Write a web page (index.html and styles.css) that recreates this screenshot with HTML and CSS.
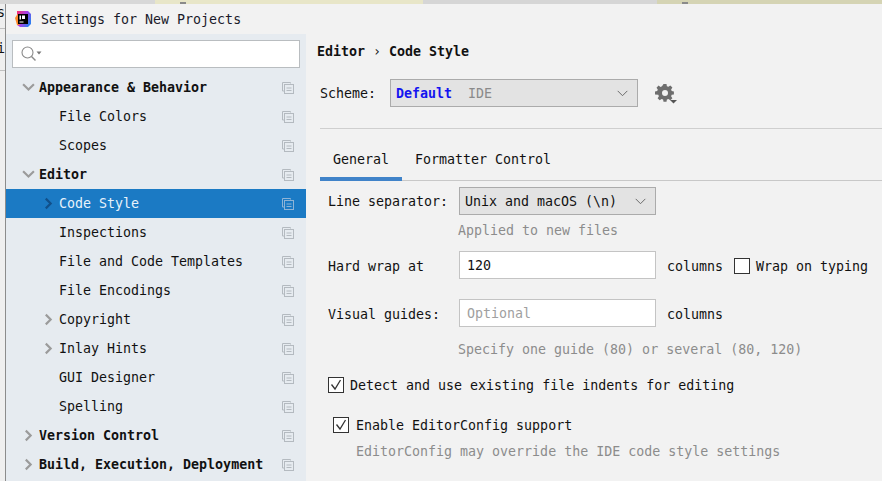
FILE: index.html
```html
<!DOCTYPE html>
<html lang="en">
<head>
<meta charset="utf-8">
<title>Settings for New Projects</title>
<link rel="stylesheet" href="styles.css">
</head>
<body>
<svg class="sprites" width="0" height="0" aria-hidden="true">
  <symbol id="copy" viewBox="0 0 12 12">
    <path d="M8.500 1.500V.5H.5V9h2" fill="none" stroke="currentColor"/>
    <rect x="2.500" y="2.500" width="9" height="9" fill="none" stroke="currentColor"/>
    <path d="M4.500 6h5M4.500 8.500h5" stroke="currentColor"/>
  </symbol>
  <symbol id="right" viewBox="0 0 10 12"><path d="M2.500 1.500 7 6l-4.500 4.500" fill="none" stroke="currentColor" stroke-width="2"/></symbol>
  <symbol id="down" viewBox="0 0 12 10"><path d="M1 2l5 4.800L11 2" fill="none" stroke="currentColor" stroke-width="2"/></symbol>
  <symbol id="caret" viewBox="0 0 14 8"><path d="M1.500 1 7 6.500 12.500 1" fill="none" stroke="currentColor" stroke-width="1.100"/></symbol>
  <symbol id="check" viewBox="0 0 14 14"><path d="M2.500 6.500 6 11l5.500-9" fill="none" stroke="#333" stroke-width="1.300"/></symbol>
</svg>
<div class="desktop">
  <div class="backdrop-top">
    <span class="strip strip-a"></span>
    <span class="strip strip-b"><span class="blob"></span></span>
    <span class="strip strip-c"></span>
    <span class="strip strip-d"><span class="blob"></span></span>
  </div>
  <div class="backdrop-row">
    <div class="backdrop-left"><span class="peek peek-s">s</span><span class="peek peek-i">i</span><span class="peek-line peek-line-a"></span><span class="peek-line peek-line-b"></span></div>
    <div class="window">
      <header class="titlebar">
        <svg class="logo" width="16" height="16" viewBox="0 0 16 16">
          <defs><linearGradient id="lg" x1="0" y1="0" x2="1" y2=".6"><stop offset="0" stop-color="#fc2f6a"/><stop offset=".55" stop-color="#a63fe8"/><stop offset="1" stop-color="#2f7cf0"/></linearGradient></defs>
          <path d="M2 0h11l3 3v10l-3 3H5l-3-2z" fill="url(#lg)"/>
          <path d="M0 7 2.500 3 5 8l-.5 6-2.500 0z" fill="#ff8a2a"/>
          <rect x="3" y="3" width="10" height="10" fill="#000"/>
          <rect x="4.500" y="10.500" width="4" height="1" fill="#fff"/>
          <rect x="4.500" y="4.500" width="1.500" height="4" fill="#fff"/>
          <rect x="7" y="4.500" width="3" height="3.500" fill="#fff"/>
        </svg>
        <span class="title">Settings for New Projects</span>
      </header>
      <div class="panes">
        <aside class="sidebar">
          <div class="search">
            <svg width="25" height="20" viewBox="0 0 25 20"><circle cx="8.500" cy="8.500" r="5.500" fill="none" stroke="#8a8a8a" stroke-width="1.100"/><path d="M12.500 12.500 16.500 16.500" stroke="#8a8a8a" stroke-width="1.500"/><path d="M17.500 7.500h5l-2.500 3z" fill="#777"/></svg>
          </div>
          <ul class="tree">
            <li class="row row-top"><svg class="chev"><use href="#down"/></svg><span class="strong">Appearance &amp; Behavior</span><svg class="copy"><use href="#copy"/></svg></li>
            <li class="row row-sub"><span>File Colors</span><svg class="copy"><use href="#copy"/></svg></li>
            <li class="row row-sub"><span>Scopes</span><svg class="copy"><use href="#copy"/></svg></li>
            <li class="row row-top"><svg class="chev"><use href="#down"/></svg><span class="strong">Editor</span><svg class="copy"><use href="#copy"/></svg></li>
            <li class="row row-sub row-selected"><svg class="arrow"><use href="#right"/></svg><span>Code Style</span><svg class="copy"><use href="#copy"/></svg></li>
            <li class="row row-sub"><span>Inspections</span><svg class="copy"><use href="#copy"/></svg></li>
            <li class="row row-sub"><span>File and Code Templates</span><svg class="copy"><use href="#copy"/></svg></li>
            <li class="row row-sub"><span>File Encodings</span><svg class="copy"><use href="#copy"/></svg></li>
            <li class="row row-sub"><svg class="arrow"><use href="#right"/></svg><span>Copyright</span><svg class="copy"><use href="#copy"/></svg></li>
            <li class="row row-sub"><svg class="arrow"><use href="#right"/></svg><span>Inlay Hints</span><svg class="copy"><use href="#copy"/></svg></li>
            <li class="row row-sub"><span>GUI Designer</span><svg class="copy"><use href="#copy"/></svg></li>
            <li class="row row-sub"><span>Spelling</span><svg class="copy"><use href="#copy"/></svg></li>
            <li class="row row-top"><svg class="chev chev-r"><use href="#right"/></svg><span class="strong">Version Control</span><svg class="copy"><use href="#copy"/></svg></li>
            <li class="row row-top"><svg class="chev chev-r"><use href="#right"/></svg><span class="strong">Build, Execution, Deployment</span><svg class="copy"><use href="#copy"/></svg></li>
          </ul>
        </aside>
        <main class="content">
          <div class="crumbs strong">Editor<span class="crumb-sep">›</span>Code Style</div>
          <div class="scheme">
            <span class="scheme-label">Scheme:</span>
            <div class="combo combo-scheme"><span class="scheme-name">Default</span><span class="scheme-kind">IDE</span><svg class="caret"><use href="#caret"/></svg></div>
            <svg class="gear" width="24" height="24" viewBox="0 0 24 24">
              <path fill="#6e6e6e" fill-rule="evenodd" d="M9.500 2h3l.4 2.200 1.500.6 1.900-1.300 2.100 2.100-1.300 1.900.6 1.500 2.200.4v3l-2.200.4-.6 1.500 1.300 1.900-2.100 2.100-1.900-1.300-1.500.6-.4 2.200h-3l-.4-2.200-1.500-.6-1.900 1.300-2.100-2.100 1.300-1.900-.6-1.500L1 12.500v-3l2.200-.4.6-1.500L2.500 5.700l2.100-2.100 1.900 1.300 1.500-.6zM11 8a3 3 0 1 0 0 6 3 3 0 0 0 0-6z"/>
              <path fill="#555" d="M16 18h7l-3.500 3.500z"/>
            </svg>
          </div>
          <hr class="rule">
          <nav class="tabs"><span class="tab tab-active">General</span><span class="tab">Formatter Control</span></nav>
          <div class="form">
            <div class="field field-sep">
              <label class="field-label">Line separator:</label>
              <div class="combo combo-sep"><span>Unix and macOS (\n)</span><svg class="caret"><use href="#caret"/></svg></div>
            </div>
            <p class="hint hint-sep">Applied to new files</p>
            <div class="field field-wrap">
              <label class="field-label field-low">Hard wrap at</label>
              <div class="input">120</div>
              <span class="unit">columns</span>
              <span class="box"></span>
              <span class="box-label">Wrap on typing</span>
            </div>
            <div class="field field-guides">
              <label class="field-label field-low">Visual guides:</label>
              <div class="input input-empty">Optional</div>
              <span class="unit">columns</span>
            </div>
            <p class="hint hint-guides">Specify one guide (80) or several (80, 120)</p>
            <div class="check-row check-detect"><span class="box"><svg width="14" height="14"><use href="#check"/></svg></span><span class="box-label">Detect and use existing file indents for editing</span></div>
            <div class="check-row check-config"><span class="box"><svg width="14" height="14"><use href="#check"/></svg></span><span class="box-label">Enable EditorConfig support</span></div>
            <p class="hint hint-config">EditorConfig may override the IDE code style settings</p>
          </div>
        </main>
      </div>
    </div>
  </div>
</div>
</body>
</html>
```
FILE: styles.css
```css
* { box-sizing: border-box; }
html, body { margin: 0; height: 100%; overflow: hidden; }
body { font: 13.3px/17px "DejaVu Sans Mono", "Liberation Mono", monospace; color: #111; background: #f2f2f2; }
.sprites { position: absolute; }
.desktop { width: 882px; height: 481px; display: flex; flex-direction: column; overflow: hidden; }
.backdrop-top { height: 4px; display: flex; flex: none; }
.strip { display: block; height: 4px; position: relative; }
.strip-a { width: 155px; background: #d8d8d8; }
.strip-b { width: 268px; background: #e8e6c8; }
.strip-c { width: 234px; background: #d6d6d6; }
.strip-d { flex: 1; background: #d5d4b4; }
.blob { position: absolute; left: 25px; top: 2px; width: 6px; height: 2px; background: #8a8a8a; }
.backdrop-row { flex: 1; display: flex; min-height: 0; }
.backdrop-left { width: 6px; flex: none; background: #efefef; border-right: 1px solid #8c8c8c; position: relative; overflow: hidden; }
.peek { position: absolute; left: -3px; }
.peek-s { top: 0; }
.peek-i { top: 36px; }
.peek-line { position: absolute; left: 0; width: 5px; height: 1px; background: #c0c0c0; }
.peek-line-a { top: 24px; }
.peek-line-b { top: 66px; }
.window { flex: 1; display: flex; flex-direction: column; min-width: 0; background: #f2f2f2; }
.titlebar { height: 30px; flex: none; display: flex; align-items: center; padding-left: 9px; }
.logo { flex: none; margin-right: 10px; }
.title { color: #1a1a2a; }
.panes { flex: 1; display: flex; min-height: 0; }
.sidebar { width: 300px; flex: none; background: #e6ebf0; padding: 6px 6px 0; }
.search { height: 28px; background: #fff; border: 1px solid #b9bdc0; padding: 3px 0 0 6px; }
.search svg { display: block; }
.tree { list-style: none; margin: 5px -6px 0; padding: 0; }
.row { height: 29px; display: flex; align-items: center; color: #111; padding-right: 12px; }
.row-top { padding-left: 16px; }
.row-sub { padding-left: 53px; }
.strong { font-weight: 700; font-size: 13.3px; }
.chev { flex: none; width: 13px; height: 11px; margin-right: 4px; color: #9b9b9b; }
.chev-r { width: 11px; height: 13px; margin: 0 5px 0 1px; }
.arrow { flex: none; width: 11px; height: 13px; margin: 0 5px 0 -16px; color: #9b9b9b; }
.copy { flex: none; width: 12px; height: 12px; margin: 1px 0 0 auto; color: #b4bac0; }
.row-selected { background: #1b7ac4; color: #e8f2fb; }
.row-selected .arrow { color: #11508a; }
.row-selected .copy { color: #8fb4d6; }
.content { flex: 1; min-width: 0; padding: 9px 0 0 11px; }
.crumbs { height: 17px; color: #111; }
.crumb-sep { margin: 0 8px; font-weight: 400; }
.scheme { display: flex; align-items: center; margin: 19px 0 0 3px; height: 28px; }
.scheme-label { width: 70px; flex: none; }
.combo { height: 28px; background: #e3e3e3; border: 1px solid #ababab; display: flex; align-items: center; padding: 0 8px 0 5px; }
.combo-scheme { width: 248px; }
.scheme-name { color: #1414f0; font-weight: 700; margin-right: 16px; }
.scheme-kind { color: #8a8a8a; }
.caret { flex: none; width: 13px; height: 7px; margin: 1px 0 0 auto; color: #666; }
.gear { margin: 1px 0 0 16px; flex: none; }
.rule { border: 0; border-top: 1px solid #cfcfcf; margin: 21px 0 0 3px; height: 0; }
.tabs { display: flex; margin: 0 0 0 3px; height: 52px; border-bottom: 1px solid #c8c8c8; padding-top: 22px; }
.tab { display: block; height: 29px; padding: 0 13px; color: #111; }
.tab:first-child { width: 82px; }
.tab:last-child { padding-left: 13px; }
.tab-active { border-bottom: 4px solid #4083c9; margin-bottom: -1px; height: 30px; }
.field { display: flex; align-items: center; height: 28px; padding-left: 11px; }
.field-label { width: 131px; flex: none; }
.field-low, .field .unit, .field .box, .field .box-label { margin-top: 2px; }
.field-sep { margin-top: 6px; }
.combo-sep { width: 197px; }
.hint { margin: 0; color: #8c8c8c; }
.hint-sep { margin: 7px 0 0 141px; }
.field-wrap { margin-top: 12px; }
.field-guides { margin-top: 20px; }
.input { width: 197px; height: 28px; background: #fff; border: 1px solid #c4c4c4; padding: 5px 7px 0; flex: none; }
.input-empty { color: #a0a0a0; }
.unit { margin-left: 11px; width: 67px; flex: none; }
.box { display: block; width: 16px; height: 16px; background: #fff; border: 1px solid #333; flex: none; position: relative; }
.box svg { position: absolute; left: 0; top: 0; display: block; }
.box-label { margin-left: 6px; white-space: nowrap; }
.hint-guides { margin: 14px 0 0 141px; }
.check-row { display: flex; align-items: center; height: 18px; }
.check-detect { margin: 18px 0 0 11px; }
.check-config { margin: 22px 0 0 16px; }
.check-config .box-label { margin-left: 7px; }
.hint-config { margin: 9px 0 0 39px; }
```
